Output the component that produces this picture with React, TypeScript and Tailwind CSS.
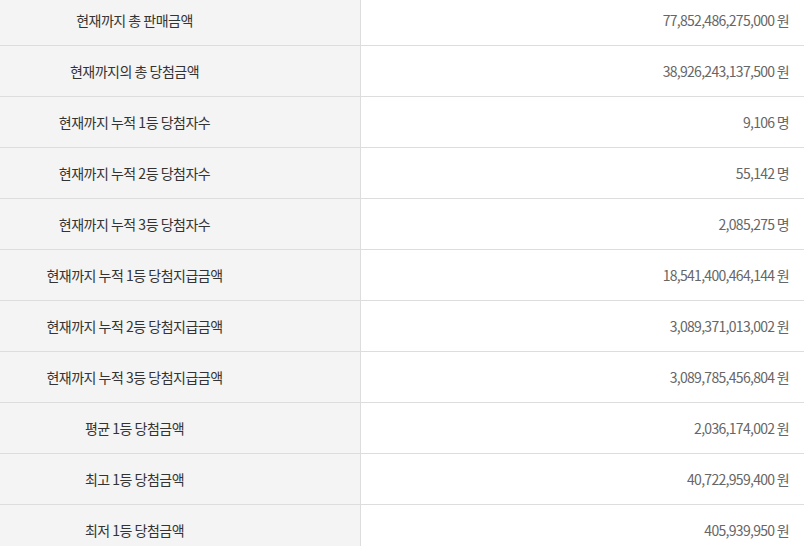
const rows: [string, string][] = [
  ["현재까지 총 판매금액", "77,852,486,275,000 원"],
  ["현재까지의 총 당첨금액", "38,926,243,137,500 원"],
  ["현재까지 누적 1등 당첨자수", "9,106 명"],
  ["현재까지 누적 2등 당첨자수", "55,142 명"],
  ["현재까지 누적 3등 당첨자수", "2,085,275 명"],
  ["현재까지 누적 1등 당첨지급금액", "18,541,400,464,144 원"],
  ["현재까지 누적 2등 당첨지급금액", "3,089,371,013,002 원"],
  ["현재까지 누적 3등 당첨지급금액", "3,089,785,456,804 원"],
  ["평균 1등 당첨금액", "2,036,174,002 원"],
  ["최고 1등 당첨금액", "40,722,959,400 원"],
  ["최저 1등 당첨금액", "405,939,950 원"],
];

export default function App() {
  return (
    <div className="w-[804px] h-[546px] overflow-hidden bg-white font-['Noto_Sans_CJK_KR','Noto_Sans',sans-serif]">
      <div className="-mt-[5px]">
        {rows.map(([label, value], i) => (
          <div
            key={i}
            className={`flex h-[51px] ${i < rows.length - 1 ? "border-b border-[#dddddd]" : ""}`}
          >
            {/* label text sits centred in the left 270px of the grey cell */}
            <div className="w-[361px] shrink-0 bg-[#f4f4f4] border-r border-[#dddddd] flex items-center justify-center pr-[91px] text-[14px] text-[#333333] tracking-[-0.5px]">
              {label}
            </div>
            <div className="flex-1 flex items-center justify-end pr-[15px] text-[14px] text-[#666666] tracking-[-0.7px]">
              {value}
            </div>
          </div>
        ))}
      </div>
    </div>
  );
}
